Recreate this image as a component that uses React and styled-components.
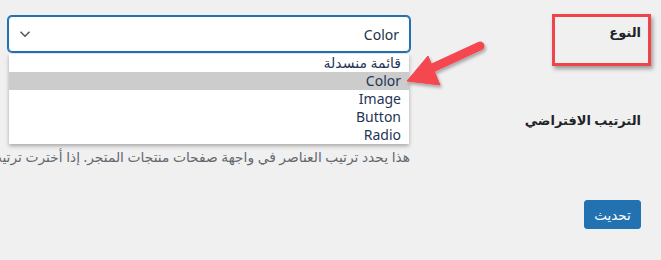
import styled, { createGlobalStyle } from "styled-components";

const options = ["قائمة منسدلة", "Color", "Image", "Button", "Radio"];

const GlobalStyle = createGlobalStyle`
  html, body {
    margin: 0;
    padding: 0;
    background-color: #f0f0f1;
  }
  body {
    font-family: "Noto Sans", "DejaVu Sans", sans-serif;
  }
`;

export default function App() {
  return (
    <>
      <GlobalStyle />
      <Page dir="rtl">
        <Row>
          <Label>
            <Marker />
            النوع
          </Label>
          <Field>
            <SelectWrap>
              <Select>
                <span>Color</span>
                <Chevron viewBox="0 0 12 8">
                  <path d="M1.5 1.8 L6 6.2 L10.5 1.8" />
                </Chevron>
              </Select>
              <List>
                {options.map((opt) => (
                  <Option key={opt} selected={opt === "Color"}>
                    {opt}
                  </Option>
                ))}
              </List>
              <Arrow viewBox="0 0 100 60">
                <defs>
                  <filter id="shade" x="-20%" y="-20%" width="150%" height="160%">
                    <feDropShadow
                      dx="1.5"
                      dy="2.5"
                      stdDeviation="1.5"
                      floodColor="#000"
                      floodOpacity="0.3"
                    />
                  </filter>
                </defs>
                <g filter="url(#shade)" fill="#f4474f" stroke="#f4474f">
                  <line
                    x1="80"
                    y1="12"
                    x2="28"
                    y2="36"
                    strokeWidth="9"
                    strokeLinecap="round"
                  />
                  <polygon
                    points="7,47 28,22 40,51"
                    strokeWidth="1"
                    strokeLinejoin="round"
                  />
                </g>
              </Arrow>
            </SelectWrap>
          </Field>
        </Row>
        <Row second>
          <Label>الترتيب الافتراضي</Label>
          <Field>
            <Description>
              هذا يحدد ترتيب العناصر في واجهة صفحات منتجات المتجر. إذا أخترت
              ترتيب مخصص يمكنك سحب وإفلات العناصر لإعادة ترتيبها.
            </Description>
          </Field>
        </Row>
        <Actions>
          <Button>تحديث</Button>
        </Actions>
      </Page>
    </>
  );
}

const Page = styled.div`
  width: 661px;
  height: 260px;
  overflow: hidden;
  box-sizing: border-box;
  padding: 16px 20px 0 8px;
  color: #1d2327;
  font-size: 14px;
`;

const Row = styled.div`
  display: flex;
  align-items: flex-start;
  margin-top: ${(props) => (props.second ? "52px" : "0")};
`;

const Label = styled.div`
  position: relative;
  width: 221px;
  flex-shrink: 0;
  padding-top: 6px;
  font-size: 13px;
  line-height: 20px;
  font-weight: 600;
  color: #1d2327;
`;

const Marker = styled.div`
  position: absolute;
  top: -2px;
  right: -10px;
  width: 93px;
  height: 46px;
  border: 3px solid #f0434a;
  box-shadow: 2px 3px 4px rgba(0, 0, 0, 0.35);
`;

const Field = styled.div`
  flex: 1;
  min-width: 0;
  padding-right: 10px;
`;

const SelectWrap = styled.div`
  position: relative;
  width: 402px;
`;

const Select = styled.div`
  box-sizing: border-box;
  height: 36px;
  display: flex;
  align-items: center;
  justify-content: space-between;
  padding: 0 10px 0 10px;
  background: #fff;
  border: 1px solid #2271b1;
  box-shadow: 0 0 0 1px #2271b1;
  border-radius: 4px;
  color: #22324a;
  font-size: 14px;
`;

const Chevron = styled.svg`
  width: 12px;
  height: 8px;
  fill: none;
  stroke: #50575e;
  stroke-width: 1.6;
`;

const List = styled.ul`
  position: absolute;
  top: 38px;
  right: 1px;
  left: 1px;
  margin: 0;
  padding: 0;
  list-style: none;
  background: #fff;
  box-shadow: 0 2px 4px rgba(0, 0, 0, 0.3);
  z-index: 2;
`;

const Option = styled.li`
  height: 18px;
  line-height: 18px;
  padding-right: 8px;
  font-size: 14px;
  color: #1f3556;
  background: ${(props) => (props.selected ? "#cccccc" : "transparent")};
`;

const Arrow = styled.svg`
  position: absolute;
  top: 18px;
  left: 392px;
  width: 100px;
  height: 60px;
  overflow: visible;
  z-index: 3;
`;

const Description = styled.p`
  margin: 44px 0 0;
  font-size: 13.8px;
  line-height: 18px;
  color: #646970;
  white-space: nowrap;
`;

const Actions = styled.div`
  display: flex;
  margin-top: 34px;
`;

const Button = styled.button`
  width: 57px;
  height: 29px;
  padding: 0;
  border: 1px solid #2271b1;
  border-radius: 3px;
  background: #2271b1;
  color: #fff;
  font-family: "Noto Sans", "DejaVu Sans", sans-serif;
  font-size: 13.5px;
`;
